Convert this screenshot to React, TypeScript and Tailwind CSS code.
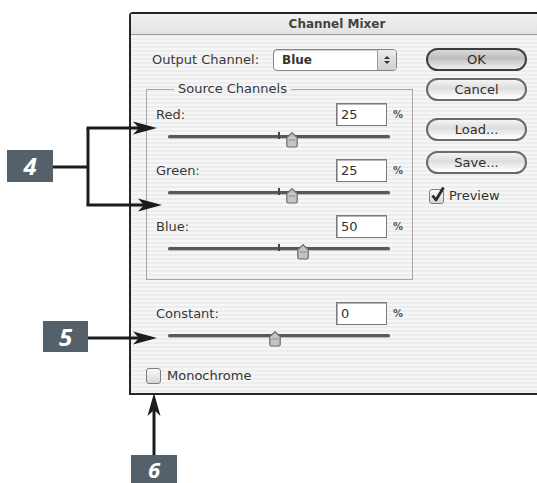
import React from 'react';

const stripes =
  'bg-[repeating-linear-gradient(180deg,#ededed_0px,#ededed_2px,#f6f6f6_2px,#f6f6f6_4px)]';

interface ChannelRow {
  label: string;
  value: number;
  thumb: number;
  tick?: boolean;
}

const sources: ChannelRow[] = [
  { label: 'Red:', value: 25, thumb: 124, tick: true },
  { label: 'Green:', value: 25, thumb: 124, tick: true },
  { label: 'Blue:', value: 50, thumb: 135, tick: true },
];

const Slider: React.FC<{ thumb: number; tick?: boolean }> = ({ thumb, tick }) => (
  <div className="relative ml-[12px] h-[20px] w-[222px]">
    <div className="absolute left-0 right-0 top-[9px] h-[3px] rounded-full bg-[#585858] shadow-[0_1px_0_#bdbdbd]" />
    {tick && <div className="absolute left-[110px] top-[6px] h-[7px] w-[2px] bg-[#444]" />}
    <svg
      className="absolute top-[6px]"
      style={{ left: thumb - 6 }}
      width="12"
      height="16"
      viewBox="0 0 12 16"
    >
      <path d="M6 0.8 L11.2 5.5 L11.2 13.5 Q11.2 15 9.7 15 L2.3 15 Q0.8 15 0.8 13.5 L0.8 5.5 Z" fill="#c4c4c4" stroke="#6a6a6a" strokeWidth="1.2" />
      <path d="M2.5 8 H9.5" stroke="#8c8c8c" strokeWidth="1" />
    </svg>
  </div>
);

const ValueRow: React.FC<{ label: string; value: number }> = ({ label, value }) => (
  <div className="flex h-[23px] items-center">
    <span className="w-[180px] text-[13px] text-[#383838]">{label}</span>
    <div className="flex h-[23px] w-[51px] items-center border border-[#7a7a7a] bg-white pl-[4px] text-[13px] text-[#333] shadow-[inset_1px_1px_0_#b5b5b5]">
      {value}
    </div>
    <span className="ml-[6px] text-[10px] font-bold text-[#555]">%</span>
  </div>
);

const AquaButton: React.FC<{ label: string; primary?: boolean; className?: string }> = ({
  label,
  primary,
  className = '',
}) => (
  <div
    className={`flex h-[23px] w-[101px] items-center justify-center rounded-full text-[13px] text-[#2e2e2e] ${
      primary
        ? 'border-2 border-[#3e3e3e] bg-[linear-gradient(180deg,#d9d9d9,#bdbdbd_45%,#c9c9c9_55%,#f0f0f0)]'
        : 'border-2 border-[#6a6a6a] bg-[linear-gradient(180deg,#f4f4f4,#dcdcdc_45%,#e6e6e6_55%,#ffffff)]'
    } ${className}`}
  >
    {label}
  </div>
);

const Callout: React.FC<{ n: string; className: string }> = ({ n, className }) => (
  <div
    className={`absolute flex items-center justify-center bg-[#55616a] font-['Open_Sans',sans-serif] font-bold italic leading-none text-white ${className}`}
  >
    {n}
  </div>
);

export default function App() {
  return (
    <div className="relative h-[483px] w-[537px] overflow-hidden bg-white font-['DejaVu_Sans',sans-serif]">
      {/* dialog */}
      <div className={`ml-[129px] mt-[12px] h-[383px] w-[416px] rounded-tl-[4px] border-2 border-[#262626] ${stripes}`}>
        <div className="flex h-[21px] items-center justify-center border-b border-[#9a9a9a] bg-[linear-gradient(180deg,#f1f1f1,#e3e3e3)] text-[12px] font-bold text-[#444]">
          Channel Mixer
        </div>

        <div className="flex pt-[13px]">
          {/* left column */}
          <div className="w-[295px] pl-[15px] pt-[1px]">
            <div className="flex h-[22px] items-center">
              <span className="ml-[6px] w-[121px] text-[13px] text-[#383838]">Output Channel:</span>
              <div className="flex h-[22px] w-[124px] overflow-hidden rounded-[4px] border border-[#858585] bg-white shadow-[inset_0_1px_0_#d0d0d0]">
                <span className="flex-1 pl-[8px] text-[12px] font-bold leading-[20px] text-[#333]">Blue</span>
                <div className="flex w-[19px] flex-col items-center justify-center gap-[2px] border-l border-[#9a9a9a] bg-[linear-gradient(180deg,#ececec,#cfcfcf)]">
                  <span className="h-0 w-0 border-x-[3px] border-b-[3px] border-x-transparent border-b-[#333]" />
                  <span className="h-0 w-0 border-x-[3px] border-t-[3px] border-x-transparent border-t-[#333]" />
                </div>
              </div>
            </div>

            <fieldset className="mt-[10px] w-[262px] border border-[#a6a6a6] px-[9px] pb-[21px]">
              <legend className="ml-[18px] px-[4px] text-[13px] leading-[16px] text-[#383838]">Source Channels</legend>
              <div className="flex flex-col gap-[13px] pt-[6px]">
                {sources.map((s) => (
                  <div key={s.label}>
                    <ValueRow label={s.label} value={s.value} />
                    <Slider thumb={s.thumb} tick={s.tick} />
                  </div>
                ))}
              </div>
            </fieldset>

            <div className="mt-[22px] pl-[10px]">
              <ValueRow label="Constant:" value={0} />
              <Slider thumb={107} />
            </div>

            <div className="mt-[23px] flex h-[16px] items-center">
              <span className="h-[16px] w-[15px] rounded-[3px] border border-[#7d7d7d] bg-[linear-gradient(180deg,#fafafa,#d6d6d6)]" />
              <span className="ml-[6px] text-[13px] text-[#333]">Monochrome</span>
            </div>
          </div>

          {/* right column */}
          <div className="flex w-[101px] flex-col">
            <AquaButton label="OK" primary />
            <AquaButton label="Cancel" className="mt-[7px]" />
            <AquaButton label="Load..." className="mt-[17px]" />
            <AquaButton label="Save..." className="mt-[10px]" />
            <div className="mt-[14px] flex h-[16px] items-center pl-[3px]">
              <span className="relative h-[15px] w-[15px] rounded-[3px] border border-[#7d7d7d] bg-[linear-gradient(180deg,#fafafa,#d6d6d6)]">
                <svg className="absolute -top-[4px] left-[1px]" width="14" height="17" viewBox="0 0 14 17">
                  <path d="M1.5 9.5 L5 14 L12.5 1.5" fill="none" stroke="#2a2a2a" strokeWidth="2.8" strokeLinejoin="round" />
                </svg>
              </span>
              <span className="ml-[5px] text-[13px] text-[#333]">Preview</span>
            </div>
          </div>
        </div>
      </div>

      {/* callout lines */}
      <svg className="pointer-events-none absolute inset-0" width="537" height="483" viewBox="0 0 537 483">
        <g stroke="#1c1c1c" strokeWidth="3" fill="none">
          <path d="M53 167 H88" />
          <path d="M88 128 V205" />
          <path d="M86.5 128 H140" />
          <path d="M86.5 205 H145" />
          <path d="M88 338 H140" />
          <path d="M154 455 V410" />
        </g>
        <g fill="#1c1c1c">
          <path d="M157 128 L133 121.5 L139 128 L133 134.5 Z" />
          <path d="M162 205 L138 198.5 L144 205 L138 211.5 Z" />
          <path d="M157 338 L133 331.5 L139 338 L133 344.5 Z" />
          <path d="M154 393 L147.5 416 L154 410 L160.5 416 Z" />
        </g>
      </svg>

      <Callout n="4" className="left-[7px] top-[150px] h-[32px] w-[46px] text-[24px]" />
      <Callout n="5" className="left-[43px] top-[321px] h-[31px] w-[45px] text-[24px]" />
      <Callout n="6" className="left-[131px] top-[455px] h-[28px] w-[46px] text-[22px]" />
    </div>
  );
}
